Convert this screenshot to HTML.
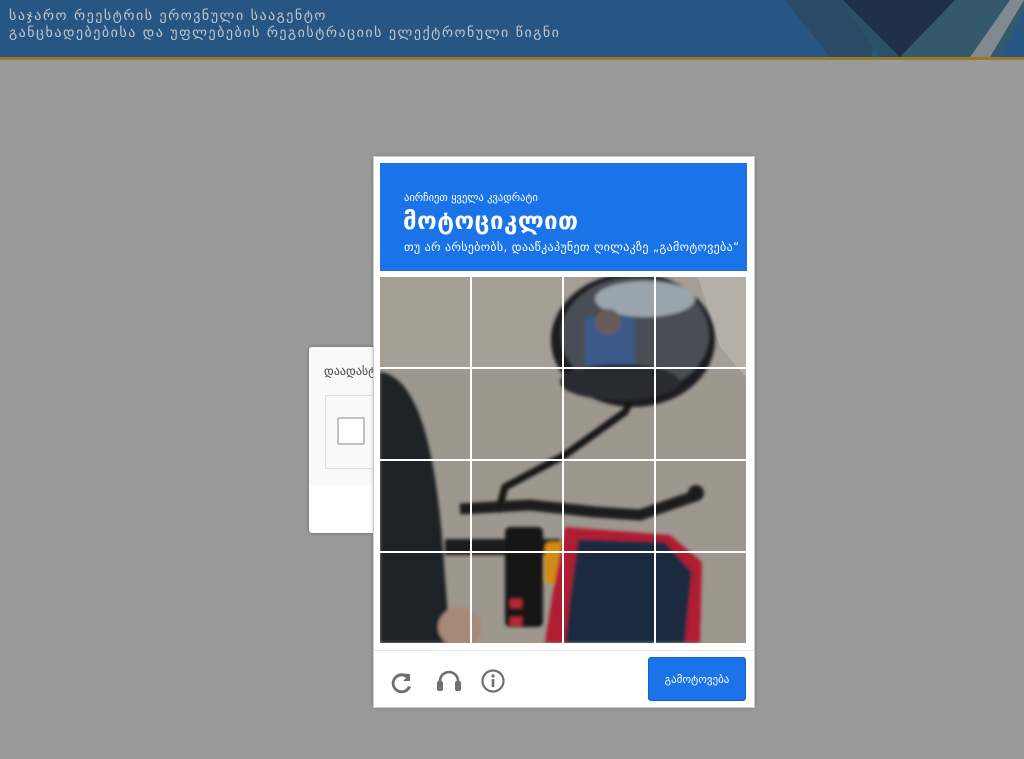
<!DOCTYPE html>
<html><head><meta charset="utf-8"><style>
body{margin:0;width:1024px;height:759px;background:#9a9a9a;position:relative;overflow:hidden;font-family:"DejaVu Sans","Liberation Sans",sans-serif}
.hdr{position:absolute;left:0;top:0;width:1024px;height:57px;background:#285684;overflow:hidden}
.gold{position:absolute;left:0;top:57px;width:1024px;height:3px;background:#9a7a24}
.ht{position:absolute;left:9px;color:#c4c8cc;font-size:14px;letter-spacing:1.5px;white-space:nowrap}
.chk{position:absolute;left:309px;top:347px;width:100px;height:186px;background:#fff;border-radius:3px;box-shadow:0 0 4px rgba(0,0,0,.3)}
.chk .grey{position:absolute;left:0;top:0;width:100%;height:138px;background:#f9f9f9;border-radius:3px 3px 0 0}
.cap{position:absolute;left:373px;top:156px;width:380px;height:550px;background:#fff;border:1px solid #ccc;box-shadow:0 0 4px rgba(0,0,0,.2)}
.blue{position:absolute;left:6px;top:6px;width:367px;height:108px;background:#1a73e8;color:#fff}
</style></head><body>
<div class="hdr">
<svg width="1024" height="57" style="position:absolute;left:0;top:0">
<polygon points="785,0 830,57 870,57 900,0" fill="#2a4a66"/>
<polygon points="840,0 880,57 930,57 970,0" fill="#2c5068"/>
<polygon points="880,0 900,57 1000,57 1024,10 1024,0" fill="#34586c"/>
<polygon points="843,0 900,57 955,0" fill="#1f2f48"/>
<polygon points="970,57 1010,0 1024,0 990,57" fill="#808890"/>
</svg>
<div class="ht" style="top:8px">საჯარო რეესტრის ეროვნული სააგენტო</div>
<div class="ht" style="top:25px">განცხადებებისა და უფლებების რეგისტრაციის ელექტრონული წიგნი</div>
</div>
<div class="gold"></div>

<div class="chk"><div class="grey"></div>
<div style="position:absolute;left:15px;top:17px;font-size:12px;color:#444">დაადასტ</div>
<div style="position:absolute;left:16px;top:48px;width:80px;height:72px;border:1px solid #ddd;background:#f9f9f9"></div>
<div style="position:absolute;left:28px;top:70px;width:24px;height:24px;border:2px solid #c1c1c1;background:#fff;border-radius:2px"></div>
</div>

<div class="cap">
<div class="blue">
<div style="position:absolute;left:24px;top:29px;font-size:10.5px">აირჩიეთ ყველა კვადრატი</div>
<div style="position:absolute;left:23px;top:44px;font-size:24px;font-weight:bold;letter-spacing:0.5px">მოტოციკლით</div>
<div style="position:absolute;left:24px;top:77px;font-size:12px;letter-spacing:0.3px">თუ არ არსებობს, დააწკაპუნეთ ღილაკზე „გამოტოვება“</div>
</div>
<svg style="position:absolute;left:6px;top:120px" width="366" height="366" viewBox="0 0 366 366">
<defs><filter id="b"><feGaussianBlur stdDeviation="1.5"/></filter></defs>
<rect width="366" height="366" fill="#9d978e"/>
<rect x="0" y="0" width="366" height="90" fill="#a49e95"/>
<polygon points="318,0 366,0 366,100 340,70" fill="#b4b0a8"/>
<g filter="url(#b)">
<ellipse cx="253" cy="63" rx="82" ry="67" fill="#1e1e24"/>
<ellipse cx="255" cy="58" rx="74" ry="58" fill="#4a4e54"/>
<ellipse cx="265" cy="22" rx="50" ry="18" fill="#9aa4ac"/>
<rect x="205" y="40" width="50" height="60" fill="#3a5a8a"/>
<circle cx="228" cy="45" r="13" fill="#6a5a58"/>
<ellipse cx="240" cy="105" rx="60" ry="18" fill="#2a2a30"/>
<polyline points="250,125 245,135 185,178 125,210 118,235" fill="none" stroke="#141414" stroke-width="7"/>
<path d="M0,95 C40,100 55,180 62,260 L70,366 L0,366 Z" fill="#1d2127"/>
<polyline points="80,232 150,228 215,235 260,238 318,218" fill="none" stroke="#1a1a1a" stroke-width="11"/>
<circle cx="316" cy="216" r="8" fill="#1a1a1a"/>
<polyline points="65,270 180,270" stroke="#1e1e1e" stroke-width="16"/>
<rect x="125" y="250" width="38" height="100" rx="5" fill="#161616"/>
<rect x="130" y="322" width="12" height="9" fill="#b02a30"/>
<rect x="130" y="340" width="12" height="9" fill="#b02a30"/>
<rect x="165" y="265" width="22" height="42" rx="5" fill="#d48a18"/>
<polygon points="185,250 290,258 322,285 320,366 165,366 172,320" fill="#b01f30"/>
<polygon points="198,262 285,265 312,295 305,366 185,366 190,320" fill="#1f2940"/>
<ellipse cx="80" cy="350" rx="22" ry="20" fill="#a88878"/>
</g>
<g stroke="#fff" stroke-width="2">
<line x1="91" y1="0" x2="91" y2="366"/><line x1="183" y1="0" x2="183" y2="366"/><line x1="275" y1="0" x2="275" y2="366"/>
<line x1="0" y1="91" x2="366" y2="91"/><line x1="0" y1="183" x2="366" y2="183"/><line x1="0" y1="275" x2="366" y2="275"/>
</g>
</svg>
<div style="position:absolute;left:0;top:493px;width:380px;height:1px;background:#e6e6e6"></div>
<svg style="position:absolute;left:16px;top:511px" width="120" height="28" viewBox="0 0 120 28" fill="#6f6f6f">
<path d="M20,5 L20,12 L13,12 L16,9 A7,7 0 1 0 18,17 L21,18 A10,10 0 1 1 14,4.5 Z" transform="translate(0,1)"/>
<path d="M50,20 L50,13 A9,9 0 0 1 68,13 L68,20" fill="none" stroke="#6f6f6f" stroke-width="2.6"/>
<rect x="47" y="13" width="6" height="10" rx="2"/><rect x="65" y="13" width="6" height="10" rx="2"/>
<circle cx="103" cy="13" r="10.5" fill="none" stroke="#6f6f6f" stroke-width="2.2"/>
<circle cx="103" cy="8" r="1.6"/><rect x="101.7" y="11" width="2.6" height="8"/>
</svg>
<div style="position:absolute;left:274px;top:500px;width:98px;height:44px;background:#1a73e8;border:1px solid #1560c8;border-radius:3px;color:#fff;font-size:11px;text-align:center;line-height:44px;box-sizing:border-box">გამოტოვება</div>
</div>
</body></html>
